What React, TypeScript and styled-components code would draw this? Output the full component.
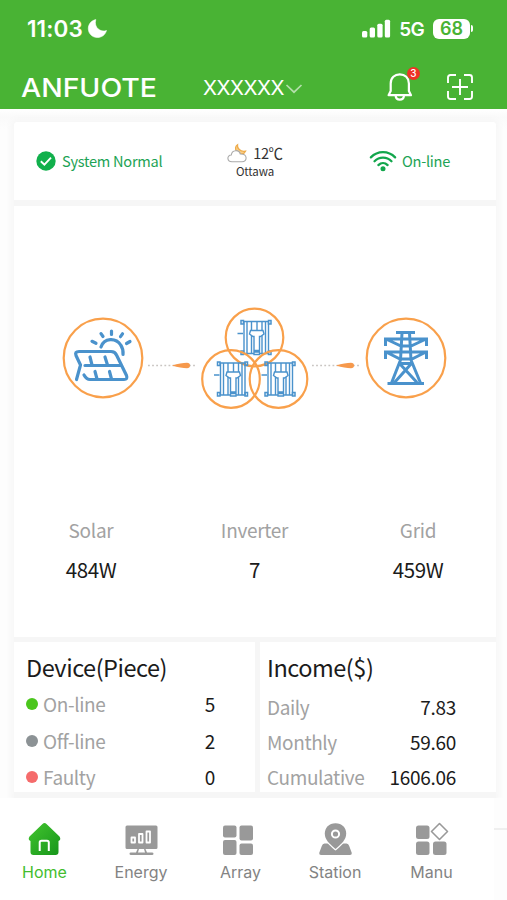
import React from "react";
import styled, { createGlobalStyle } from "styled-components";

const cjk = '"Noto Sans CJK SC", "Noto Sans", sans-serif';
const ui = 'Inter, "Liberation Sans", sans-serif';
const ORANGE = "#f9a04b";
const BLUE = "#4a92cc";

const GlobalStyle = createGlobalStyle`
  * { box-sizing: border-box; }
  body { margin: 0; background: #fdfdfd; font-family: ${cjk}; color: #1b1b1b; }
  svg { display: block; flex: none; overflow: visible; }
`;

const Phone = styled.div`
  width: 507px;
  height: 900px;
  overflow: hidden;
  display: flex;
  flex-direction: column;
`;

const Header = styled.header`
  height: 109px;
  flex: none;
  background: #49b334;
  color: #fff;
`;

const StatusBar = styled.div`
  height: 57px;
  padding: 0 34px 0 27px;
  display: flex;
  align-items: center;
  font-family: ${ui};
`;

const Time = styled.span`
  font-size: 22.5px;
  font-weight: 600;
  letter-spacing: 0.1px;
  width: 61px;
  white-space: nowrap;
`;

const Signals = styled.div`
  margin-left: auto;
  display: flex;
  align-items: center;
`;

const Network = styled.span`
  font-size: 19px;
  font-weight: 600;
  letter-spacing: -0.7px;
  margin: 2px 9px 0 9px;
`;

const Battery = styled.div`
  width: 37px;
  height: 20px;
  border-radius: 6px;
  background: #fff;
  color: #49b334;
  font-size: 18px;
  font-weight: 600;
  line-height: 20px;
  text-align: center;
`;

const BatteryTip = styled.div`
  width: 2px;
  height: 7px;
  margin-left: 1px;
  border-radius: 0 2px 2px 0;
  background: #fff;
`;

const TitleBar = styled.div`
  height: 52px;
  padding: 8px 34px 0 21px;
  display: flex;
  align-items: center;
`;

const Brand = styled.div`
  width: 182px;
`;

const Site = styled.div`
  display: flex;
  align-items: center;
  font-family: ${ui};
  font-size: 20.5px;
  font-weight: 400;
  line-height: 28px;
  gap: 3px;
  padding-top: 2px;
`;

const SiteName = styled.span`
  width: 80px;
  white-space: nowrap;
  letter-spacing: -0.5px;
`;

const Actions = styled.div`
  margin-left: auto;
  display: flex;
  align-items: center;
  gap: 34px;
`;

const BellButton = styled.div`
  position: relative;
  width: 26px;
  height: 28px;
`;

const Badge = styled.span`
  position: absolute;
  left: 20px;
  top: -6px;
  width: 13px;
  height: 13px;
  border-radius: 50%;
  background: #ee3325;
  font: 500 10px/13px ${ui};
  text-align: center;
`;

const Content = styled.main`
  height: 689px;
  flex: none;
  background: linear-gradient(#fff, #fafafa 8px, #fdfdfd 20px);
  padding: 13px 11px 0 14px;
`;

const Board = styled.div`
  background: #f6f6f6;
  box-shadow: 0 0 6px 3px #f6f6f6;
  display: flex;
  flex-direction: column;
  height: 676px;
  border-radius: 3px 3px 0 0;
`;

const StatusCard = styled.section`
  height: 78px;
  background: #fff;
  border-radius: 3px 3px 0 0;
  margin-bottom: 6px;
  display: grid;
  grid-template-columns: 178px 126px 1fr;
  align-items: center;
`;

const StatusItem = styled.div<{ $left: number }>`
  display: flex;
  align-items: center;
  padding-left: ${(p) => p.$left}px;
  color: #1da355;
  font-size: 14.6px;
  line-height: 20px;
  letter-spacing: -0.27px;
  white-space: nowrap;
  gap: 6px;
`;

const Weather = styled.div`
  display: flex;
  flex-direction: column;
  align-items: center;
  color: #333;
  height: 38px;
`;

const WeatherNow = styled.div`
  display: flex;
  align-items: center;
  gap: 6px;
  font-size: 14.5px;
  line-height: 22px;
  letter-spacing: -0.4px;
`;

const City = styled.div`
  font-size: 11.5px;
  line-height: 14px;
  letter-spacing: -0.1px;
`;

const EnergyCard = styled.section`
  height: 431px;
  background: #fff;
  margin-bottom: 5px;
  padding-top: 101px;
`;

const Flow = styled.div`
  height: 102px;
  display: flex;
  align-items: center;
  padding-left: 48px;
`;

const Readings = styled.div`
  margin-top: 106px;
  display: grid;
  grid-template-columns: 154px 173px 154px;
`;

const Reading = styled.div`
  text-align: center;
  white-space: nowrap;
`;

const ReadingLabel = styled.div`
  font-size: 19px;
  line-height: 30px;
  color: #a2a2a2;
  letter-spacing: -0.3px;
`;

const ReadingValue = styled.div`
  font-size: 20.5px;
  line-height: 30px;
  margin-top: 9px;
  letter-spacing: -0.4px;
`;

const Summary = styled.div`
  height: 151px;
  display: grid;
  grid-template-columns: 241px 236px;
  column-gap: 5px;
`;

const Panel = styled.section<{ $left: number }>`
  background: #fff;
  height: 150px;
  padding: 8px 40px 0 ${(p) => p.$left}px;
`;

const PanelTitle = styled.h2<{ $gap: number }>`
  margin: 0 0 ${(p) => p.$gap}px;
  font-size: 23.5px;
  font-weight: 400;
  line-height: 34px;
  letter-spacing: -0.47px;
`;

const Line = styled.div<{ $h: number }>`
  height: ${(p) => p.$h}px;
  display: flex;
  align-items: center;
  font-size: 19px;
  line-height: 28px;
  white-space: nowrap;
`;

const Dot = styled.i<{ $color: string }>`
  width: 12px;
  height: 12px;
  border-radius: 50%;
  margin: 0 5px 0 0;
  background: ${(p) => p.$color};
`;

const LineLabel = styled.span`
  color: #a2a2a2;
  letter-spacing: -0.38px;
`;

const LineValue = styled.span`
  margin-left: auto;
  letter-spacing: -0.3px;
`;

const Footer = styled.footer`
  height: 102px;
  flex: none;
  display: flex;
`;

const Tabs = styled.nav`
  width: 494px;
  background: #fff;
  padding: 25px 0 0;
  display: grid;
  grid-template-columns: 89px 104px 95px 94px 99px;
`;

const Tab = styled.div<{ $active?: boolean }>`
  display: flex;
  flex-direction: column;
  align-items: center;
  font-family: ${ui};
  font-size: 16px;
  line-height: 22px;
  gap: 4px;
  color: ${(p) => (p.$active ? "#43bd2f" : "#838383")};
`;

const TabIcon = styled.span<{ $shift?: number }>`
  margin-right: ${(p) => p.$shift ?? 0}px;
`;

const Edge = styled.div`
  width: 13px;
  height: 32px;
  border-bottom: 2px solid #efefef;
  background: #fdfdfd;
`;

const Moon = () => (
  <svg width="19" height="19" viewBox="0 0 19 19">
    <path d="M7.8.6C3.300 1.500.3 5.300.3 9.600.3 14.700 4.400 18.500 9.300 18.500 13.500 18.500 17.200 16.100 18.500 11.500 12.500 13.800 5.500 8.500 7.800.6Z" fill="#fff" stroke="#fff" strokeWidth=".6" strokeLinejoin="round" />
  </svg>
);

const Cell = () => (
  <svg width="28" height="19" viewBox="0 0 28 19" fill="#fff">
    <rect x="0" y="12" width="5.3" height="6.5" rx="1.5" />
    <rect x="7.7" y="8.5" width="5.3" height="10" rx="1.5" />
    <rect x="15.3" y="4.7" width="5.3" height="13.8" rx="1.5" />
    <rect x="22.8" y="0.8" width="5.3" height="17.7" rx="1.5" />
  </svg>
);

const Logo = () => (
  <svg width="136" height="22" viewBox="0 0 136 22">
    <text x="0" y="20.5" textLength="136" lengthAdjust="spacingAndGlyphs" fill="#fff" fontFamily="Inter" fontSize="26" fontWeight="500">ANFUOTE</text>
  </svg>
);

const Chevron = () => (
  <svg width="16" height="9" viewBox="0 0 16 9" fill="none" stroke="#b4dfaa" strokeWidth="1.7">
    <path d="M0.5 1 8 8.2 15.5 1" />
  </svg>
);

const Bell = () => (
  <svg width="26" height="28" viewBox="0 0 26 28" fill="none" stroke="#fff" strokeWidth="2.2" strokeLinejoin="round" strokeLinecap="round">
    <path d="M3.7 18V10.500C3.700 5 7.600 1.300 12.800 1.300S21.900 5 21.900 10.500V18L24 22.200H1.600Z" />
    <path d="M8.6 22.4C8.8 25.5 10.4 26.700 12.800 26.700S16.800 25.500 17 22.400" />
  </svg>
);

const Scan = () => (
  <svg width="26" height="26" viewBox="0 0 26 26" fill="none" stroke="#fff" strokeWidth="1.9">
    <path d="M1 9V3.5Q1 1 3.5 1H9M17 1H22.5Q25 1 25 3.5V9M25 17V22.5Q25 25 22.5 25H17M9 25H3.5Q1 25 1 22.5V17M5 13H21M13 5V21" />
  </svg>
);

const Check = () => (
  <svg width="20" height="20" viewBox="0 0 20 20">
    <circle cx="10" cy="10" r="9.7" fill="#11b04c" />
    <path d="m4.8 10.2 3.6 3.5 6.6-7" fill="none" stroke="#fff" strokeWidth="1.9" />
  </svg>
);

const Wifi = () => (
  <svg width="26" height="21" viewBox="0 0 27 21" fill="none" stroke="#12a64c" strokeWidth="2.4" strokeLinecap="round">
    <path d="M.9 6.2C8-1 19-1 26.1 6.200M4.700 10.300C9.700 5.300 17.300 5.300 22.300 10.300M8.700 14.200C11.500 11.500 15.500 11.500 18.300 14.200" />
    <circle cx="13.5" cy="18" r="2.6" fill="#12a64c" stroke="none" />
  </svg>
);

const CloudMoon = () => (
  <svg width="20" height="19" viewBox="0 0 20 19">
    <path d="M10.5.8C10 4 13 8.2 18.5 7.2 17 10.5 12.5 11 10 8S8.5 2 10.5.8Z" fill="#fad08a" stroke="#eeac4c" strokeWidth="1.3" />
    <path d="M5 17.8C-.5 17.5-.2 11 4.3 11 5 5.4 12.2 5.4 13.3 10 21 9.8 20.5 17.8 15 17.8Z" fill="#fff" stroke="#aaa" strokeWidth="1.1" />
  </svg>
);

const Solar = () => (
  <svg width="82" height="82" viewBox="0 0 82 82" fill="none" stroke={BLUE} strokeWidth="3.2" strokeLinecap="round" strokeLinejoin="round">
    <circle cx="41" cy="41" r="39.3" stroke={ORANGE} strokeWidth="2.2" />
    <path d="M14.5 62.500 18.500 48 14 38.500Q12.500 34.500 17 34.500H49Q53 34.500 54.500 38L64.500 58.500Q66 62.500 62 62.500H28Q24.500 62.500 22 58M23 48.500H58M28 40 30 48M43 40 45.500 48M33 54.500 35 62M47.500 54.500 49.500 62" />
    <path d="M39 30C42 20.5 54 20.5 58.7 28Q61.5 32 61 37.500M30 24.300 34 26.300M39 16.600 41 19.500M49.500 14V17.500M60.500 16.800 58.500 19.700M68 24.500 64.500 26.500" />
  </svg>
);

const Pylon = () => (
  <svg width="82" height="82" viewBox="0 0 82 82" fill="none" stroke={BLUE} strokeWidth="3">
    <circle cx="41" cy="41" r="39.300" stroke={ORANGE} strokeWidth="2.200" />
    <path d="M31 15.500H50M37 16 35.500 43 26.500 66M44.500 16 46 43 55.500 66M22.500 66.500H59M35 47 52 65.500M46 47 29.500 65.500M20.500 29V22H61.500V29M22 22.500 36 29H46L60 22.500M20.500 42V35H61.500V42M22 35.500 35 42H47L60 35.500M36 46.500H46" />
  </svg>
);

const InverterUnit = ({ x, y }: { x: number; y: number }) => (
  <g transform={`translate(${x} ${y})`}>
    <circle cx="0" cy="0" r="28.800" stroke={ORANGE} strokeWidth="2.200" />
    <path d="M-11-16H14M-11 16H14M-10.500-16V16M-7.500-16V16M-3-16V16M2.500-16V-7M7.500-16V16M11-16V16M14-16V16" />
    <path d="M-11-17H-13.500V-13.500H-11ZM14-17H16.500V-13.500H14ZM-11 13.500H-13.500V17H-11ZM14 13.500H16.500V17H14ZM-17-4H-11.500" strokeWidth="1.500" />
    <path d="M-4-7H8.500L9.500-3.500 6-1H5V13H-.5V-1H-1.500L-5-3.500ZM-.5 14.500H5V17H-.5Z" fill="#fff" strokeWidth="1.400" />
  </g>
);

const Inverters = () => (
  <svg width="108" height="102" viewBox="0 0 108 102" fill="none" stroke={BLUE} strokeWidth="1.400">
    <InverterUnit x={53.5} y={30.5} />
    <InverterUnit x={30} y={72} />
    <InverterUnit x={77.500} y={72} />
  </svg>
);

const Link = styled.svg<{ $l: number; $r: number }>`
  margin: 15px ${(p) => p.$r}px 0 ${(p) => p.$l}px;
`;

const Stream = ({ left, right }: { left: number; right: number }) => (
  <Link $l={left} $r={right} width="49" height="7" viewBox="0 0 49 7">
    <path d="M0 3.500H49" stroke="#c9c5c2" strokeWidth="1.600" strokeDasharray="1.800 2.300" />
    <path d="M24 3.500Q33 .8 39 .8 42 .8 42 3.500T39 6.200Q33 6.200 24 3.500Z" fill="#f6994c" />
  </Link>
);

const HomeIcon = () => (
  <svg width="33" height="34" viewBox="0 0 33 34">
    <defs>
      <linearGradient id="house" x1="0" y1="0" x2="1" y2="1">
        <stop stopColor="#43c52f" />
        <stop offset="1" stopColor="#16951a" />
      </linearGradient>
    </defs>
    <path d="M14.5 1Q16.500-.8 18.500 1L31.500 13.500Q33.500 16.500 30.500 18V29Q30.500 32 27.500 32H5.500Q2.500 32 2.500 29V18Q-.5 16.500 1.500 13.500Z" fill="url(#house)" />
    <path d="M11.700 28V19.500Q11.700 17.700 13.500 17.700H19Q20.800 17.700 20.800 19.500V28" fill="none" stroke="#fff" strokeWidth="2" />
  </svg>
);

const EnergyIcon = () => (
  <svg width="33" height="34" viewBox="0 0 33 34">
    <path d="M2 2.500H31Q32.500 2.500 32.500 4V24.500Q32.500 26 31 26H20.500L22 29.500H27Q28.500 29.500 28.500 30.700T27 32H6Q4.500 32 4.500 30.700T6 29.500H11L12.500 26H2Q.5 26 .5 24.500V4Q.5 2.500 2 2.500Z" fill="#999" />
    <path d="M14 26H19L20 29.500H13Z" fill="#fff" />
    <path d="M6.500 14.500H10V19.500H6.500ZM14 11H17.500V19.500H14ZM21.500 8.500H25V19.500H21.500Z" fill="none" stroke="#fff" strokeWidth="1.800" strokeLinejoin="round" />
  </svg>
);

const ArrayIcon = () => (
  <svg width="33" height="34" viewBox="0 0 33 34" fill="#999">
    <rect x="1" y="2.500" width="13.500" height="12" rx="2" />
    <rect x="17.500" y="2.500" width="13.500" height="15" rx="2" />
    <rect x="1" y="17" width="13.500" height="15" rx="2" />
    <rect x="17.500" y="20.500" width="13.500" height="11.500" rx="2" />
  </svg>
);

const StationIcon = () => (
  <svg width="33" height="34" viewBox="0 0 33 34" fill="#999">
    <path d="M5.500 20.500H27.500Q29.500 20.500 30.200 23L32.800 30Q33 32 31 32H2Q0 32 .2 30L2.800 23Q3.500 20.500 5.500 20.500Z" />
    <path d="M16.500.3C10 .3 5.800 5 5.800 10.500 5.800 16.500 10 20.500 16.500 26 23 20.500 27.200 16.500 27.200 10.500 27.200 5 23 .3 16.500.3Z" stroke="#fff" strokeWidth="2.400" paintOrder="stroke" />
    <circle cx="16.500" cy="11" r="3.600" stroke="#fff" strokeWidth="2" />
  </svg>
);

const MenuIcon = () => (
  <svg width="33" height="34" viewBox="0 0 33 34" fill="#999">
    <rect x="1" y="2.500" width="13.500" height="13.500" rx="2.500" />
    <rect x="1" y="18.500" width="13.500" height="13.500" rx="2.500" />
    <rect x="18" y="18.500" width="13.500" height="13.500" rx="2.500" />
    <path d="M24.500.5 32.500 8.500 24.500 16.500 16.500 8.500Z" fill="none" stroke="#999" strokeWidth="1.600" strokeLinejoin="round" />
  </svg>
);

const readings = [
  ["Solar", "484W"],
  ["Inverter", "7"],
  ["Grid", "459W"],
];

const devices = [
  { label: "On-line", value: "5", color: "#4bc61d" },
  { label: "Off-line", value: "2", color: "#8c9295" },
  { label: "Faulty", value: "0", color: "#f56b6b" },
];

const income = [
  ["Daily", "7.83"],
  ["Monthly", "59.60"],
  ["Cumulative", "1606.06"],
];

const tabs = [
  { label: "Home", Icon: HomeIcon, active: true },
  { label: "Energy", Icon: EnergyIcon },
  { label: "Array", Icon: ArrayIcon, shift: 5 },
  { label: "Station", Icon: StationIcon },
  { label: "Manu", Icon: MenuIcon },
];

export default function App() {
  return (
    <Phone>
      <GlobalStyle />
      <Header>
        <StatusBar>
          <Time>11:03</Time>
          <Moon />
          <Signals>
            <Cell />
            <Network>5G</Network>
            <Battery>68</Battery>
            <BatteryTip />
          </Signals>
        </StatusBar>
        <TitleBar>
          <Brand><Logo /></Brand>
          <Site>
            <SiteName>XXXXXX</SiteName>
            <Chevron />
          </Site>
          <Actions>
            <BellButton>
              <Bell />
              <Badge>3</Badge>
            </BellButton>
            <Scan />
          </Actions>
        </TitleBar>
      </Header>
      <Content>
        <Board>
          <StatusCard>
            <StatusItem $left={22}><Check />System Normal</StatusItem>
            <Weather>
              <WeatherNow><CloudMoon />12℃</WeatherNow>
              <City>Ottawa</City>
            </Weather>
            <StatusItem $left={52}><Wifi />On-line</StatusItem>
          </StatusCard>
          <EnergyCard>
            <Flow>
              <Solar />
              <Stream left={4} right={4} />
              <Inverters />
              <Stream left={3} right={4} />
              <Pylon />
            </Flow>
            <Readings>
              {readings.map(([label, value]) => (
                <Reading key={label}>
                  <ReadingLabel>{label}</ReadingLabel>
                  <ReadingValue>{value}</ReadingValue>
                </Reading>
              ))}
            </Readings>
          </EnergyCard>
          <Summary>
            <Panel $left={12}>
              <PanelTitle $gap={2}>Device(Piece)</PanelTitle>
              {devices.map((d) => (
                <Line key={d.label} $h={36.5}>
                  <Dot $color={d.color} />
                  <LineLabel>{d.label}</LineLabel>
                  <LineValue>{d.value}</LineValue>
                </Line>
              ))}
            </Panel>
            <Panel $left={7}>
              <PanelTitle $gap={5}>Income($)</PanelTitle>
              {income.map(([label, value]) => (
                <Line key={label} $h={35}>
                  <LineLabel>{label}</LineLabel>
                  <LineValue>{value}</LineValue>
                </Line>
              ))}
            </Panel>
          </Summary>
        </Board>
      </Content>
      <Footer>
        <Tabs>
          {tabs.map(({ label, Icon, active, shift }) => (
            <Tab key={label} $active={active}>
              <TabIcon $shift={shift}><Icon /></TabIcon>
              <span>{label}</span>
            </Tab>
          ))}
        </Tabs>
        <Edge />
      </Footer>
    </Phone>
  );
}
